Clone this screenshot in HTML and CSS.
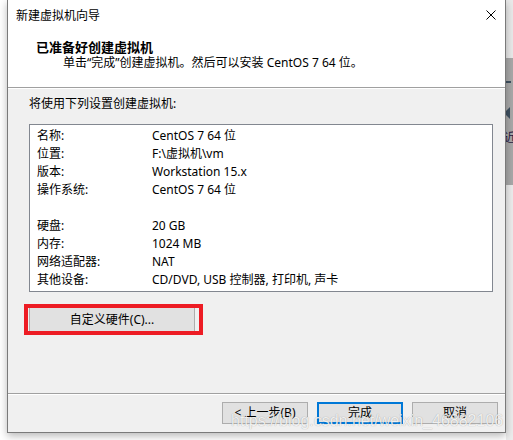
FILE: index.html
```html
<!DOCTYPE html>
<html lang="zh-CN">
<head>
<meta charset="utf-8">
<title>新建虚拟机向导</title>
<link rel="stylesheet" href="styles.css">
</head>
<body>
<div class="screen">
  <div class="dialog">
    <div class="top">
      <div class="titlebar">
        <span class="title">新建虚拟机向导</span>
        <svg class="close" width="10" height="10" viewBox="0 0 10 10"><path d="M0.5 0.5 L9.5 9.5 M9.5 0.5 L0.5 9.5" stroke="#000" stroke-width="1" fill="none"/></svg>
      </div>
      <div class="head-title">已准备好创建虚拟机</div>
      <div class="head-sub">单击“完成”创建虚拟机。然后可以安装 CentOS 7 64 位。</div>
    </div>
    <div class="body">
      <div class="intro">将使用下列设置创建虚拟机:</div>
      <div class="listbox">
        <div class="row"><span class="k">名称:</span><span class="v">CentOS 7 64 位</span></div>
        <div class="row"><span class="k">位置:</span><span class="v">F:\虚拟机\vm</span></div>
        <div class="row"><span class="k">版本:</span><span class="v">Workstation 15.x</span></div>
        <div class="row"><span class="k">操作系统:</span><span class="v">CentOS 7 64 位</span></div>
        <div class="row"></div>
        <div class="row"><span class="k">硬盘:</span><span class="v">20 GB</span></div>
        <div class="row"><span class="k">内存:</span><span class="v">1024 MB</span></div>
        <div class="row"><span class="k">网络适配器:</span><span class="v">NAT</span></div>
        <div class="row"><span class="k">其他设备:</span><span class="v">CD/DVD, USB 控制器, 打印机, 声卡</span></div>
      </div>
      <div class="custom-wrap"><button class="btn custom">自定义硬件(C)...</button></div>
    </div>
    <div class="footer">
      <button class="btn">&lt; 上一步(B)</button>
      <button class="btn focused">完成</button>
      <button class="btn">取消</button>
    </div>
  </div>
  <div class="backapp">
    <div class="ba-top"></div>
    <div class="ba-mid">
      <div class="ba-dash"></div>
      <div class="ba-arrow"></div>
      <div class="ba-char">近</div>
    </div>
    <div class="ba-bottom"></div>
  </div>
  <div class="watermark">https://blog.csdn.net/weixin_46882106</div>
</div>
</body>
</html>
```

FILE: styles.css
```css
html, body {
  margin: 0;
  padding: 0;
  background: #ffffff;
}
body {
  font-family: "Noto Sans", "Noto Sans CJK SC", sans-serif;
  font-size: 12px;
  color: #000;
}
.screen {
  position: relative;
  width: 513px;
  height: 440px;
  display: flex;
  overflow: hidden;
}
.dialog {
  position: relative;
  z-index: 1;
  margin-left: 7px;
  width: 499px;
  height: 433px;
  box-sizing: border-box;
  border-left: 1px solid #7a7a7a;
  border-right: 1px solid #7a7a7a;
  border-bottom: 1px solid #7a7a7a;
  background: #f0f0f0;
  display: flex;
  flex-direction: column;
  box-shadow: 0 3px 8px rgba(0,0,0,0.28);
}
.top {
  background: #fff;
  height: 88px;
  box-sizing: border-box;
  border-bottom: 1px solid #a0a0a0;
}
.titlebar {
  height: 31px;
  display: flex;
  align-items: center;
  justify-content: space-between;
  padding: 0 9px 0 8px;
}
.title {
  line-height: 16px;
}
.close {
  display: block;
  margin-top: -1px;
}
.head-title {
  margin-top: 8px;
  padding-left: 28px;
  font-weight: bold;
  font-size: 13px;
  line-height: 16px;
}
.head-sub {
  padding-left: 55px;
  line-height: 16px;
}
.body {
  flex: 1;
  padding: 8px 0 0 21px;
  box-shadow: inset 0 1px #ffffff;
}
.intro {
  line-height: 16px;
}
.listbox {
  margin-top: 12px;
  width: 464px;
  height: 168px;
  box-sizing: border-box;
  border: 1px solid #828790;
  background: #fff;
  padding: 2px 0 2px 7px;
}
.row {
  display: flex;
  height: 18px;
  line-height: 18px;
}
.k {
  width: 115px;
  flex: none;
}
.custom-wrap {
  margin-top: 12px;
  margin-left: -5px;
  width: 179px;
  height: 31px;
  box-sizing: border-box;
  border: 4px solid #ed1c24;
  padding: 0 4px 0 1px;
  display: flex;
}
.btn {
  font-family: "Noto Sans", "Noto Sans CJK SC", sans-serif;
  font-size: 12px;
  color: #000;
  background: #e1e1e1;
  border: 1px solid #adadad;
  width: 86px;
  height: 22px;
  padding: 0;
  margin: 0;
  line-height: 18px;
}
.custom {
  width: 100%;
  height: 23px;
  border-top: none;
  border-bottom: none;
}
.footer {
  height: 39px;
  box-sizing: border-box;
  border-top: 1px solid #a0a0a0;
  box-shadow: inset 0 1px #ffffff;
  display: flex;
  justify-content: flex-end;
  align-items: flex-start;
  gap: 9px;
  padding: 8px 7px 0 0;
}
.focused {
  border: 2px solid #0078d7;
}
.backapp {
  flex: 1;
  display: flex;
  flex-direction: column;
}
.ba-top {
  height: 58px;
  background: #e9e9e9;
}
.ba-mid {
  height: 127px;
  background: #a8a8a8;
  position: relative;
  overflow: hidden;
}
.ba-dash {
  position: absolute;
  left: 0;
  top: 23px;
  width: 5px;
  height: 2px;
  background: #3e5060;
}
.ba-arrow {
  position: absolute;
  left: -2px;
  top: 49px;
  width: 0;
  height: 0;
  border-top: 6px solid transparent;
  border-bottom: 6px solid transparent;
  border-right: 6px solid #3e5060;
}
.ba-char {
  position: absolute;
  left: -2px;
  top: 72px;
  font-size: 12px;
  line-height: 16px;
  color: #2a1a40;
}
.ba-bottom {
  flex: 1;
  background: #ececec;
}
.watermark {
  position: absolute;
  z-index: 2;
  left: 231px;
  top: 413px;
  font-family: "Liberation Sans", Arial, sans-serif;
  font-size: 16px;
  line-height: 16px;
  color: rgba(255,255,255,0.85);
  text-shadow: 0 0 1px rgba(0,0,0,0.35);
  white-space: nowrap;
  pointer-events: none;
}
```
